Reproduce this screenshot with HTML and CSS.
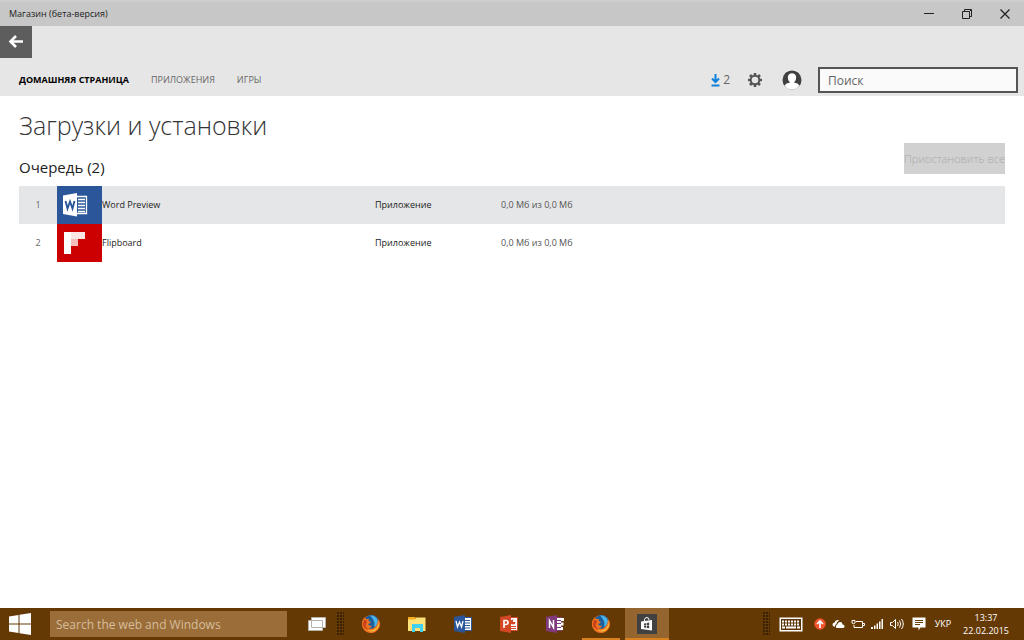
FILE: index.html
```html
<!DOCTYPE html>
<html lang="ru">
<head>
<meta charset="utf-8">
<title>Магазин (бета-версия)</title>
<link rel="stylesheet" href="styles.css">
</head>
<body>
<svg class="defs" aria-hidden="true">
  <symbol id="firefox" viewBox="0 0 18 18">
    <circle cx="9" cy="9" r="9" fill="#e8641b"/>
    <circle cx="9.500" cy="7.500" r="7.500" fill="#1c5f9f"/>
    <path d="M8 .5Q14 0 16 6Q16 10 12 12Q14 6 8 .5z" fill="#49b4e8"/>
    <path d="M1 4.500L2.500 2.500L4 4L7 4L6.500 6L9 7L7.500 8.500L6 9Q7 11.500 10 10.500Q9.500 13 6.500 13Q10 15 13 12Q16 9 16 4Q19 9 17 13Q14 18 9 18Q1 17 0 10Q0 6 1 4.500z" fill="#ee7220"/>
    <path d="M17 6Q18 12 14 15Q10 18 5 15Q12 16.500 15 12Q17 9 17 6z" fill="#fbc83b"/>
    <path d="M2 5L4 5L5 7L3.500 10Q4 13 7 15Q1 13 1 9z" fill="#c8401c"/>
  </symbol>
</svg>

<header class="titlebar">
  <span class="titlebar-text">Магазин (бета-версия)</span>
  <div class="window-buttons">
    <button class="window-button" aria-label="Свернуть"><svg width="12" height="12"><path d="M1 5.500h10" stroke="#222"/></svg></button>
    <button class="window-button" aria-label="Восстановить"><svg width="12" height="12" fill="none" stroke="#222"><path d="M1.500 3.500h7v7h-7zM3.500 3.500v-2h7v7h-2M8.500 3.500l2-2"/></svg></button>
    <button class="window-button" aria-label="Закрыть"><svg width="12" height="12"><path d="M1.500 1.500l9 9M10.500 1.500l-9 9" stroke="#222" stroke-width="1.300"/></svg></button>
  </div>
</header>

<div class="store-header">
  <button class="back" aria-label="Назад"><svg width="16" height="14" fill="none" stroke="#fff"><path d="M2 6.500h13" stroke-width="2.500"/><path d="M8 1L2.500 6.500L8 12" stroke-width="2.600"/></svg></button>
  <div class="navbar">
    <nav class="tabs">
      <a class="tab tab-active" href="#">ДОМАШНЯЯ СТРАНИЦА</a>
      <a class="tab" href="#">ПРИЛОЖЕНИЯ</a>
      <a class="tab" href="#">ИГРЫ</a>
    </nav>
    <div class="tools">
      <button class="tool downloads" aria-label="Загрузки: 2"><svg width="9" height="14" fill="none" stroke="#1080dc"><path d="M4.500 1v8M1 5.500L4.500 9L8 5.500M.5 12.500h8" stroke-width="2"/></svg><span>2</span></button>
      <button class="tool" aria-label="Параметры"><svg width="14" height="14" fill="none" stroke="#555"><circle cx="7" cy="7" r="4.300" stroke-width="2"/><path d="M7 0v2.500M7 11.500v2.500M0 7h2.500M11.500 7h2.500M2 2l2 2M10 10l2 2M12 2l-2 2M4 10l-2 2" stroke-width="2.600"/></svg></button>
      <button class="tool account" aria-label="Учётная запись"><svg width="20" height="20"><circle cx="10" cy="10" r="9.500" fill="#404040"/><path d="M2.500 15.500Q4 13 8 12.500Q5.500 10 5.800 7Q6.500 3.300 10 3.300Q13.500 3.300 14.200 7Q14.500 10 12 12.500Q16 13 17.500 15.500Q15 19.500 10 19.500Q5 19.500 2.500 15.500z" fill="#fff"/></svg></button>
      <input class="store-search" type="search" placeholder="Поиск" aria-label="Поиск">
    </div>
  </div>
</div>

<main class="content">
  <h1 class="title">Загрузки и установки</h1>
  <div class="queue-head">
    <h2 class="queue-title">Очередь (2)</h2>
    <button class="pause" disabled>Приостановить все</button>
  </div>
  <table class="queue">
    <colgroup><col class="col-number"><col class="col-icon"><col class="col-name"><col class="col-type"><col></colgroup>
    <tbody>
      <tr class="row row-selected">
        <td class="number">1</td>
        <td><div class="app-icon word"><svg width="26" height="26"><path d="M14 4.500h9.500v17H14" fill="#2b579a" stroke="#fff" stroke-width="1.300"/><path d="M15 7.500h7M15 10.500h7M15 13.500h7M15 16.500h7M15 19.500h7" stroke="#fff" stroke-width="1.600"/><path d="M0 3.500L14 1v23.500L0 22z" fill="#fff"/><path d="M2.500 9l2 7.500L7 9.500l2.500 7l2-7.500" fill="none" stroke="#2b579a" stroke-width="1.900"/></svg></div></td>
        <td>Word Preview</td>
        <td>Приложение</td>
        <td class="size">0,0 Мб из 0,0 Мб</td>
      </tr>
      <tr class="row">
        <td class="number">2</td>
        <td><div class="app-icon flipboard"><svg width="24" height="22"><path d="M1 0h7v22H1z" fill="#fff"/><path d="M8 0h14v7H8z" fill="#fbe5e5"/><path d="M8 7h7v7H8z" fill="#f5bcbc"/></svg></div></td>
        <td>Flipboard</td>
        <td>Приложение</td>
        <td class="size">0,0 Мб из 0,0 Мб</td>
      </tr>
    </tbody>
  </table>
</main>

<footer class="taskbar">
  <button class="start" aria-label="Start"><svg width="23" height="22" fill="#fff"><path d="M0 3.500L9.500 2v8.500H0zM10.500 1.800L22 0v10.500H10.500zM0 11.500h9.500V20L0 18.500zM10.500 11.500H22V22l-11.500-1.800z"/></svg></button>
  <input class="web-search" type="search" placeholder="Search the web and Windows" aria-label="Search the web and Windows">
  <button class="task-view" aria-label="Task View"><svg width="20" height="16" fill="#fff" stroke="#b5b1ad"><path d="M4.500 1.500h14v10h-14zM1.500 4.500h14v10h-14z"/></svg></button>
  <span class="grip"></span>
  <div class="apps">
    <button class="app" aria-label="Firefox"><svg width="18" height="18"><use href="#firefox"/></svg></button>
    <button class="app" aria-label="File Explorer"><svg width="18" height="16"><path d="M0 2.500h7l1-1h9.500V15H0z" fill="#fde179"/><path d="M0 1h7l1 1.500L7 3.500H0z" fill="#f5ad1b"/><path d="M4 16V8h11v8h-3v-4H7v4z" fill="#3fd0f2"/></svg></button>
    <button class="app" aria-label="Word"><svg width="18" height="18"><path d="M9 2.500h8.500v13H9z" fill="#fff" stroke="#2b579a"/><path d="M11 5.500h5M11 8h5M11 10.500h5M11 13h5" stroke="#2b579a"/><path d="M0 2L11 0v18L0 16z" fill="#2b579a"/><path d="M2 6l1.500 6L5.500 7l2 5L9 6" fill="none" stroke="#fff" stroke-width="1.300"/></svg></button>
    <button class="app" aria-label="PowerPoint"><svg width="18" height="18"><path d="M9 2.500h8.500v13H9z" fill="#fff" stroke="#d24726"/><circle cx="13" cy="7" r="2.500" fill="#d24726"/><path d="M13 7V4.500h3V7z" fill="#fff"/><path d="M11 11.500h5M11 13.500h5" stroke="#d24726"/><path d="M0 2L11 0v18L0 16z" fill="#d24726"/><path d="M4 13V5.500h2q2 0 2 2t-2 2H4" fill="none" stroke="#fff" stroke-width="1.600"/></svg></button>
    <button class="app" aria-label="OneNote"><svg width="18" height="18"><path d="M9 2.500h6.500v13H9z" fill="#fff" stroke="#80397b"/><path d="M15 3h3v3h-3zM15 7.500h2.500v3H15zM15 12h2v3h-2z" fill="#fff"/><path d="M11 5.500h4M11 8.500h4M11 12.500h4" stroke="#80397b"/><path d="M0 2L11 0v18L0 16z" fill="#80397b"/><path d="M3.500 13V5.500l4 7V5" fill="none" stroke="#fff" stroke-width="1.500"/></svg></button>
    <button class="app app-running" aria-label="Firefox"><svg width="18" height="18"><use href="#firefox"/></svg></button>
    <button class="app app-current" aria-label="Магазин"><svg width="20" height="20"><path d="M0 0h20v20H0z" fill="#414141"/><path d="M4 7.500L15 6v10.500L4 15z" fill="#fff"/><path d="M7.500 7V5.500Q8 3.500 10 3.500T12 6" fill="none" stroke="#fff"/><path d="M7 9.500l2-.3v2H7zM9.700 9l2.500-.4v2.600H9.700zM7 11.800h2v2l-2-.3zM9.700 11.800h2.500v2.500l-2.500-.4z" fill="#414141"/></svg></button>
  </div>
  <div class="tray">
    <span class="grip"></span>
    <button class="tray-button keyboard" aria-label="Keyboard"><svg width="24" height="15"><path d="M.5.500h23v14H.5z" fill="#fff"/><path d="M2 2h20v11H2z" fill="#5c350b"/><path d="M3 4.500h18M3 7.500h18" stroke="#fff" stroke-width="2" stroke-dasharray="2 1"/><path d="M3 10.500h3M7 10.500h10M18 10.500h3" stroke="#fff" stroke-width="2"/></svg></button>
    <button class="tray-button" aria-label="Updates"><svg width="12" height="12"><circle cx="6" cy="6" r="5.700" fill="#f0532d"/><path d="M6 10V3.500M3 6l3-3l3 3" fill="none" stroke="#fff" stroke-width="1.700"/></svg></button>
    <button class="tray-button" aria-label="OneDrive"><svg width="13" height="10"><path d="M1 7Q-.5 4.500 2.500 3.500Q4 0 7.500 1.500Q4.500 2.500 4.500 5Q2.500 6 3 8z" fill="#fff"/><path d="M4.500 9Q3 7 5.300 5.500Q6 2.500 8.500 3Q10.500 3.300 10.500 5.500Q13 6 12.500 8L11.500 9z" fill="#fff"/></svg></button>
    <button class="tray-button" aria-label="Battery"><svg width="14" height="10" fill="none" stroke="#fff"><path d="M5 2.500h6.500v6H3V6M12 4.500h1.500v2H12M1 1.500v2.500q1.500 1.500 3 0V1.500z"/></svg></button>
    <button class="tray-button" aria-label="Network"><svg width="13" height="10" fill="#fff"><path d="M0 8h2v2H0zM3 6.500h1.500V10H3zM5.500 4.500H7V10H5.500zM8 2.500h1.500V10H8zM10.500 0H12v10h-1.500z"/></svg></button>
    <button class="tray-button" aria-label="Volume"><svg width="14" height="12" fill="none" stroke="#fff"><path d="M.5 4.500h2l3-3v9l-3-3h-2zM7.500 4q1.500 2 0 4M9.500 2.500q2.500 3.500 0 7M11.500 1q3.500 5 0 10"/></svg></button>
    <button class="tray-button messages" aria-label="Notifications"><svg width="14" height="14"><path d="M.5.500h13v10H8.500L6.500 13.500V10.500h-6z" fill="#fff"/><path d="M3 3.500h8M3 5.500h8M3 7.500h5" stroke="#6a3c07"/></svg></button>
    <button class="language">УКР</button>
    <time class="clock" datetime="2015-02-22T13:37"><span>13:37</span><span>22.02.2015</span></time>
  </div>
</footer>
</body>
</html>
```
FILE: styles.css
```css
* {
  box-sizing: border-box;
}

body {
  margin: 0;
  min-height: 100vh;
  display: flex;
  flex-direction: column;
  background: #fff;
  color: #222;
  font: 9px/14px "Open Sans", "Noto Sans", sans-serif;
}

button {
  display: flex;
  align-items: center;
  justify-content: center;
  padding: 0;
  border: 0;
  background: none;
  color: inherit;
  font: inherit;
}

svg {
  display: block;
  flex: none;
}

.defs {
  position: absolute;
  width: 0;
  height: 0;
}

.titlebar {
  display: flex;
  align-items: stretch;
  justify-content: space-between;
  height: 26px;
  padding-left: 9px;
  border-top: 2px solid #cfcfcf;
  background: #c7c7c7;
}

.titlebar-text {
  align-self: center;
}

.window-buttons {
  display: flex;
}

.window-button {
  width: 38px;
}

.store-header {
  background: #e6e6e6;
}

.back {
  width: 32px;
  height: 32px;
  background: #5d5d5d;
}

.navbar {
  display: flex;
  align-items: center;
  justify-content: space-between;
  padding: 9px 6px 3px 19px;
}

.tabs {
  display: flex;
  gap: 22px;
}

.tab {
  color: #666;
  text-decoration: none;
}

.tab-active {
  color: #000;
  font-weight: 700;
}

.tools {
  display: flex;
  align-items: center;
  gap: 18px;
}

.downloads {
  gap: 3px;
  color: #666;
  font-size: 12px;
}

.account {
  margin: 0 -2px 0 2px;
}

.store-search {
  width: 200px;
  height: 26px;
  padding: 0 8px;
  border: 2px solid #555;
  border-radius: 0;
  background: #fafafa;
  font: 12px "Open Sans", "Noto Sans", sans-serif;
}

.store-search::placeholder {
  color: #666;
}

.content {
  flex: 1;
  padding: 12px 19px;
}

.title {
  margin: 0;
  color: #333;
  font-size: 25px;
  font-weight: 300;
  line-height: 35px;
}

.queue-head {
  display: flex;
  align-items: flex-start;
  justify-content: space-between;
  height: 43px;
}

.queue-title {
  margin: 0;
  padding-top: 13px;
  font-size: 15px;
  font-weight: 400;
  line-height: 22px;
}

.pause {
  width: 101px;
  height: 31px;
  background: #d1d1d1;
  color: #aaa;
  font-size: 11px;
  font-weight: 300;
  white-space: nowrap;
}

.queue {
  width: 100%;
  border-collapse: collapse;
  table-layout: fixed;
}

.col-number {
  width: 38px;
}

.col-icon {
  width: 45px;
}

.col-name {
  width: 273px;
}

.col-type {
  width: 126px;
}

.row {
  height: 38px;
}

.row td {
  padding: 0;
}

.row-selected {
  background: #e5e6e8;
}

.row .number {
  color: #666;
  text-align: center;
}

.size {
  color: #555;
}

.app-icon {
  display: flex;
  align-items: center;
  height: 38px;
  padding-left: 6px;
}

.word {
  background: #2b579a;
}

.flipboard {
  background: #c00;
}

.taskbar {
  display: flex;
  align-items: center;
  height: 32px;
  background: #653904;
  color: #fff;
}

.start {
  width: 41px;
  height: 32px;
}

.web-search {
  width: 237px;
  height: 26px;
  margin-left: 9px;
  padding: 0 6px;
  border: 0;
  border-radius: 0;
  background: #9b6d38;
  font: 12px "Open Sans", "Noto Sans", sans-serif;
}

.web-search::placeholder {
  color: #d6bd9d;
}

.task-view {
  margin-left: 20px;
}

.grip {
  flex: none;
  width: 7px;
  height: 24px;
  margin-left: 10px;
  background: radial-gradient(circle at 1px 1px, #3a2103 1px, transparent 1px) 0 0 / 3px 3px;
}

.apps {
  display: flex;
  gap: 2px;
  margin-left: 5px;
}

.app {
  width: 44px;
  height: 32px;
}

.app-running {
  background: linear-gradient(#d9801f, #d9801f) center bottom / 38px 2px no-repeat;
}

.app-current {
  background: linear-gradient(#d9801f, #d9801f) center bottom / 100% 2px no-repeat #94652f;
}

.tray {
  display: flex;
  align-items: center;
  gap: 6px;
  margin-left: auto;
  padding-right: 15px;
}

.keyboard {
  margin: 0 5px 0 3px;
}

.messages {
  margin: 0 3px 0 2px;
}

.clock {
  display: flex;
  flex-direction: column;
  align-items: center;
  margin-left: 6px;
  line-height: 13px;
}
```
